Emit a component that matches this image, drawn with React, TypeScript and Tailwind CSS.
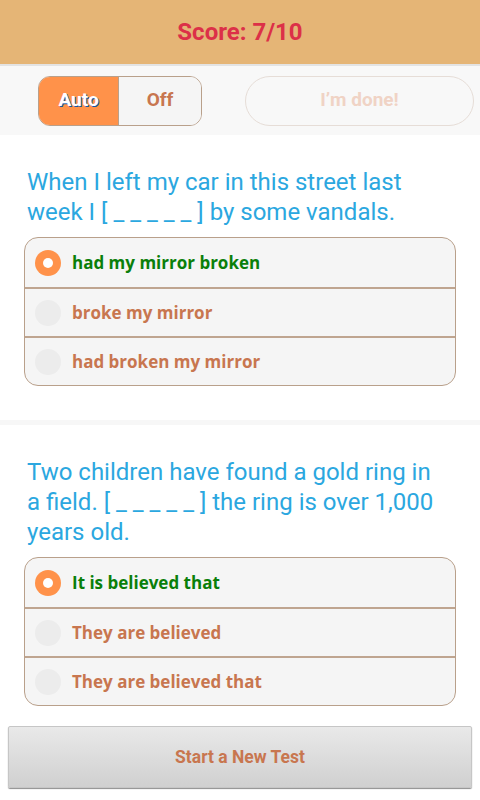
import React, { useState } from 'react';

interface Question {
  text: string[];
  options: string[];
  selected: number;
}

const questions: Question[] = [
  {
    text: ['When I left my car in this street last', 'week I [ _ _ _ _ _ ] by some vandals.'],
    options: ['had my mirror broken', 'broke my mirror', 'had broken my mirror'],
    selected: 0,
  },
  {
    text: ['Two children have found a gold ring in', 'a field. [ _ _ _ _ _ ] the ring is over 1,000', 'years old.'],
    options: ['It is believed that', 'They are believed', 'They are believed that'],
    selected: 0,
  },
];

function Radio({ checked }: { checked: boolean }) {
  return checked ? (
    <span className="w-[26px] h-[26px] rounded-full bg-[#ff924a] flex items-center justify-center shrink-0">
      <span className="w-[10px] h-[10px] rounded-full bg-white" />
    </span>
  ) : (
    <span className="w-[26px] h-[26px] rounded-full bg-[#ececec] shrink-0" />
  );
}

function QuestionBlock({ q }: { q: Question }) {
  return (
    <section className="bg-white px-6 pt-[32px]">
      <p className="px-[3px] text-[24px] leading-[30px] text-[#2ba7e0] font-['Roboto',sans-serif] whitespace-nowrap">
        {q.text.map((line, i) => (
          <span key={i} className="block">{line}</span>
        ))}
      </p>
      <div className="mt-[10px] rounded-[14px] border border-[#b9a08b] bg-[#f5f5f5] overflow-hidden">
        {q.options.map((opt, i) => (
          <div
            key={i}
            className={`h-[49px] flex items-center gap-[11px] pl-[10px] ${i > 0 ? 'border-t-2 border-[#bfa590]' : ''}`}
          >
            <Radio checked={i === q.selected} />
            <span
              className={`text-[17px] font-bold font-['Open_Sans',sans-serif] ${
                i === q.selected ? 'text-[#0a7f0a]' : 'text-[#c8764f]'
              }`}
            >
              {opt}
            </span>
          </div>
        ))}
      </div>
    </section>
  );
}

export default function App() {
  const [mode, setMode] = useState<'auto' | 'off'>('auto');

  return (
    <div className="w-[480px] h-[800px] bg-white font-['Roboto',sans-serif] overflow-hidden">
      <header className="h-[64px] bg-[#e5b576] flex items-center justify-center border-b-2 border-[#e3e3e3] box-content">
        <span className="text-[24px] font-bold text-[#dc3048]">Score: 7/10</span>
      </header>

      <div className="h-[69px] bg-[#f8f8f8] flex items-center pl-[38px] pr-[6px] gap-[43px]">
        <div className="flex w-[164px] h-[50px] rounded-[12px] border border-[#b9a08b] overflow-hidden">
          <button
            onClick={() => setMode('auto')}
            className={`w-[80px] h-full text-[19px] font-bold border-r border-[#b9a08b] ${
              mode === 'auto' ? 'bg-[#ff924a] text-white [text-shadow:1px_1px_0_#1456a8]' : 'bg-[#f5f5f5] text-[#c8764f]'
            }`}
          >
            Auto
          </button>
          <button
            onClick={() => setMode('off')}
            className={`flex-1 h-full text-[19px] font-bold ${
              mode === 'off' ? 'bg-[#ff924a] text-white [text-shadow:1px_1px_0_#1456a8]' : 'bg-[#f5f5f5] text-[#c8764f]'
            }`}
          >
            Off
          </button>
        </div>
        <button className="w-[229px] h-[50px] rounded-full border border-[#e6ddd7] bg-[#f8f8f8] text-[19px] font-bold text-[#f0d3c5]">
          I’m done!
        </button>
      </div>

      <QuestionBlock q={questions[0]} />
      <div className="h-[34px] bg-white" />
      <div className="h-[5px] bg-[#f7f7f7]" />
      <QuestionBlock q={questions[1]} />

      <div className="px-2 pt-[20px]">
        <button className="w-full h-[62px] rounded-[2px] border border-[#c6c6c6] bg-gradient-to-b from-[#e9e9e9] to-[#d0d0d0] shadow-[0_1px_1px_rgba(0,0,0,0.45)] text-[17.5px] font-bold text-[#c8764f]">
          Start a New Test
        </button>
      </div>
    </div>
  );
}
